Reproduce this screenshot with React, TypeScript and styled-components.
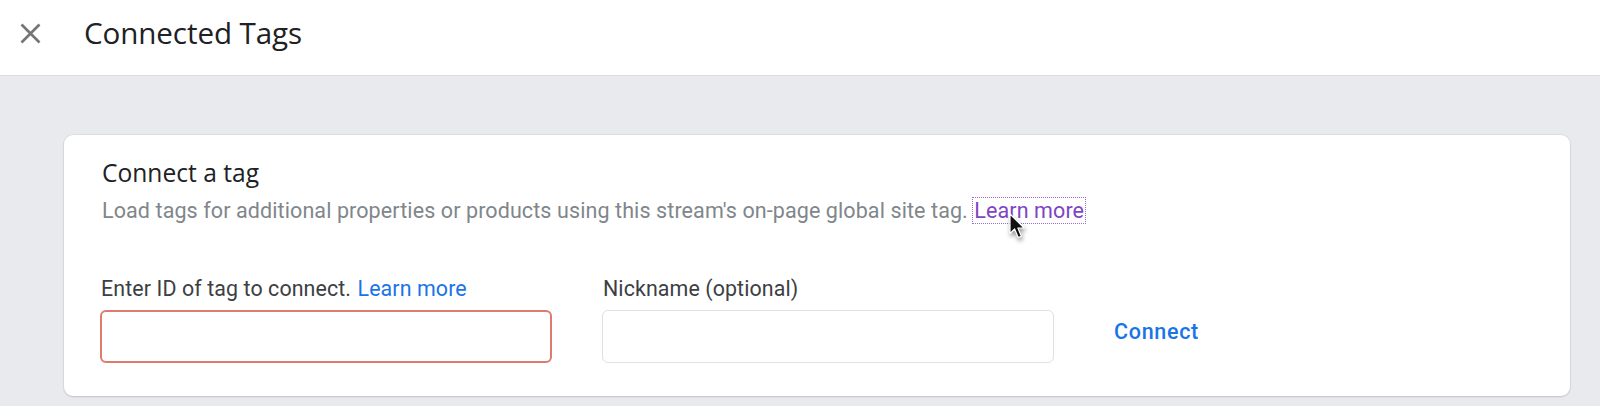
import * as React from "react";
import styled, { createGlobalStyle } from "styled-components";

const GlobalStyle = createGlobalStyle`
  html, body {
    margin: 0;
    padding: 0;
    background: #e8eaed;
    font-family: Roboto, "Liberation Sans", Arial, sans-serif;
  }
`;

const Page = styled.div`
  width: 1600px;
  height: 406px;
  background: #e8eaed;
  overflow: hidden;
`;

const Header = styled.header`
  height: 76px;
  background: #fff;
  border-bottom: 1px solid #dadce0;
  display: flex;
  align-items: center;
  padding-left: 20px;
  box-sizing: border-box;
`;

const CloseButton = styled.button`
  width: 21px;
  height: 21px;
  padding: 0;
  border: none;
  background: transparent;
  display: flex;
  align-items: center;
  justify-content: center;
  margin-right: 43px;
  margin-top: -8px;
`;

const Title = styled.h1`
  margin: 0 0 11px;
  font-family: "Open Sans", Roboto, sans-serif;
  font-weight: 400;
  font-size: 29.6px;
  color: #202124;
  letter-spacing: -0.1px;
`;

const Body = styled.main`
  padding: 59px 30px 0 64px;
`;

const Card = styled.section`
  position: relative;
  background: #fff;
  border-radius: 9px;
  box-shadow: 0 1px 2px rgba(60, 64, 67, 0.18), 0 0 0 1px rgba(60, 64, 67, 0.05);
  padding: 23px 36px 0 37px;
  height: 261px;
  box-sizing: border-box;
`;

const CardTitle = styled.h2`
  margin: 0 0 0 1px;
  font-family: "Open Sans", Roboto, sans-serif;
  font-weight: 400;
  font-size: 24.6px;
  line-height: 30px;
  color: #202124;
`;

const Description = styled.p`
  margin: 9px 0 0 1px;
  font-size: 21.5px;
  line-height: 28px;
  color: #80868b;
  letter-spacing: 0.1px;
`;

const Link = styled.a<{ $visited?: boolean; $focused?: boolean }>`
  color: ${({ $visited }) => ($visited ? "#7e44c4" : "#1a73e8")};
  text-decoration: none;
  cursor: pointer;
  outline: ${({ $focused }) => ($focused ? "1.5px dotted #9b6bd8" : "none")};
  outline-offset: 0;
  padding: 0 1px;
`;

const FieldRow = styled.div`
  display: flex;
  align-items: flex-end;
  margin: 50px 0 0 -1px;
`;

const Field = styled.label`
  display: flex;
  flex-direction: column;
  width: 452px;
  margin-right: 50px;
`;

const FieldLabel = styled.span`
  font-size: 21.4px;
  line-height: 28px;
  color: #3c4043;
  margin: 0 0 7px 1px;
  letter-spacing: 0.1px;
  white-space: nowrap;
`;

const TextInput = styled.input<{ $error?: boolean }>`
  height: 53px;
  box-sizing: border-box;
  border: ${({ $error }) => ($error ? "2px solid #dc7b6e" : "1.5px solid #dfe1e5")};
  border-radius: 6px;
  outline: none;
  padding: 0 14px;
  font-size: 20px;
  font-family: inherit;
  background: #fff;
`;

const ConnectButton = styled.button`
  height: 53px;
  margin-left: -2px;
  margin-bottom: 5px;
  padding: 0 12px;
  border: none;
  background: transparent;
  color: #1a73e8;
  font-family: Roboto, sans-serif;
  font-weight: 500;
  font-size: 21.5px;
  letter-spacing: 0.7px;
  cursor: pointer;
`;

const Pointer = styled.svg`
  position: absolute;
  left: 945px;
  top: 78px;
  pointer-events: none;
  filter: drop-shadow(1px 3px 2px rgba(0, 0, 0, 0.4));
`;

export default function App() {
  return (
    <Page>
      <GlobalStyle />
      <Header>
        <CloseButton aria-label="close">
          <svg width="21" height="21" viewBox="0 0 21 21">
            <path d="M1.5 1.5 L19.5 19.5 M19.5 1.5 L1.5 19.5" stroke="#757575" strokeWidth="2.6" />
          </svg>
        </CloseButton>
        <Title>Connected Tags</Title>
      </Header>
      <Body>
        <Card>
          <CardTitle>Connect a tag</CardTitle>
          <Description>
            Load tags for additional properties or products using this stream's on-page global site tag.{" "}
            <Link $visited $focused>Learn more</Link>
          </Description>
          <FieldRow>
            <Field>
              <FieldLabel>
                Enter ID of tag to connect. <Link>Learn more</Link>
              </FieldLabel>
              <TextInput $error />
            </Field>
            <Field>
              <FieldLabel>Nickname (optional)</FieldLabel>
              <TextInput />
            </Field>
            <ConnectButton>Connect</ConnectButton>
          </FieldRow>
          <Pointer width="18" height="27" viewBox="0 0 18 27">
            <path d="M1 1 L1 20.5 L5.6 16 L9.2 24.5 L12.4 23.2 L8.9 15 L15.2 15 Z" fill="#111" stroke="#fff" strokeWidth="1.2" strokeLinejoin="round" />
          </Pointer>
        </Card>
      </Body>
    </Page>
  );
}
